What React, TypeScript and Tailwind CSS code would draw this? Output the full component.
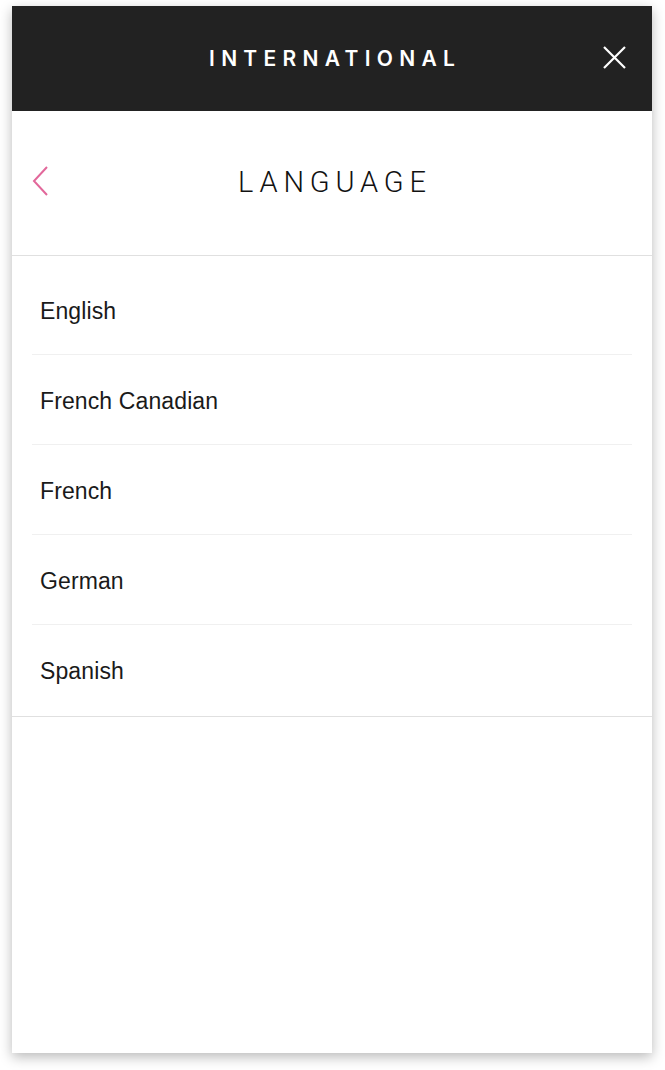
const languages = ["English", "French Canadian", "French", "German", "Spanish"];

export default function App() {
  return (
    <div className="min-h-[1070px] bg-white pt-[6px] pl-[12px]">
      <div className="flex h-[1047px] w-[640px] flex-col bg-white shadow-[0_4px_12px_rgba(0,0,0,0.28)]">
        <header className="relative flex h-[105px] items-center justify-center bg-[#222222]">
          <h1 className="pl-[0.3em] text-[21px] font-semibold tracking-[0.3em] text-white [font-family:Inter,'Liberation_Sans',sans-serif]">
            INTERNATIONAL
          </h1>
          <button type="button" aria-label="Close" className="absolute top-[34px] right-[20px] p-[6px]">
            <svg width="23" height="23" viewBox="0 0 23 23" fill="none" stroke="white" strokeWidth="2.2">
              <path d="M1 1 L22 22 M22 1 L1 22" />
            </svg>
          </button>
        </header>

        <div className="relative flex h-[145px] items-center justify-center border-b border-[#e0e0e0]">
          <button type="button" aria-label="Back" className="absolute top-[55px] left-[20px]">
            <svg width="16" height="30" viewBox="0 0 16 30" fill="none" stroke="#e2689b" strokeWidth="2">
              <path d="M15 1 L2 15 L15 29" />
            </svg>
          </button>
          <h2 className="pl-[0.2em] text-[29px] font-light tracking-[0.2em] text-[#111] [font-family:Roboto,'Liberation_Sans',sans-serif]">
            LANGUAGE
          </h2>
        </div>

        <ul className="border-b border-[#e0e0e0] pt-[9px] pb-[1px]">
          {languages.map((lang, i) => (
            <li
              key={lang}
              className={`mx-5 flex h-[90px] items-center px-2 pt-[3px] ${i < languages.length - 1 ? "border-b border-[#f0f0f0]" : ""}`}
            >
              <span className="text-[23px] tracking-[0.005em] text-[#1a1a1a] [font-family:'Liberation_Sans',Arial,sans-serif]">
                {lang}
              </span>
            </li>
          ))}
        </ul>
      </div>
    </div>
  );
}
